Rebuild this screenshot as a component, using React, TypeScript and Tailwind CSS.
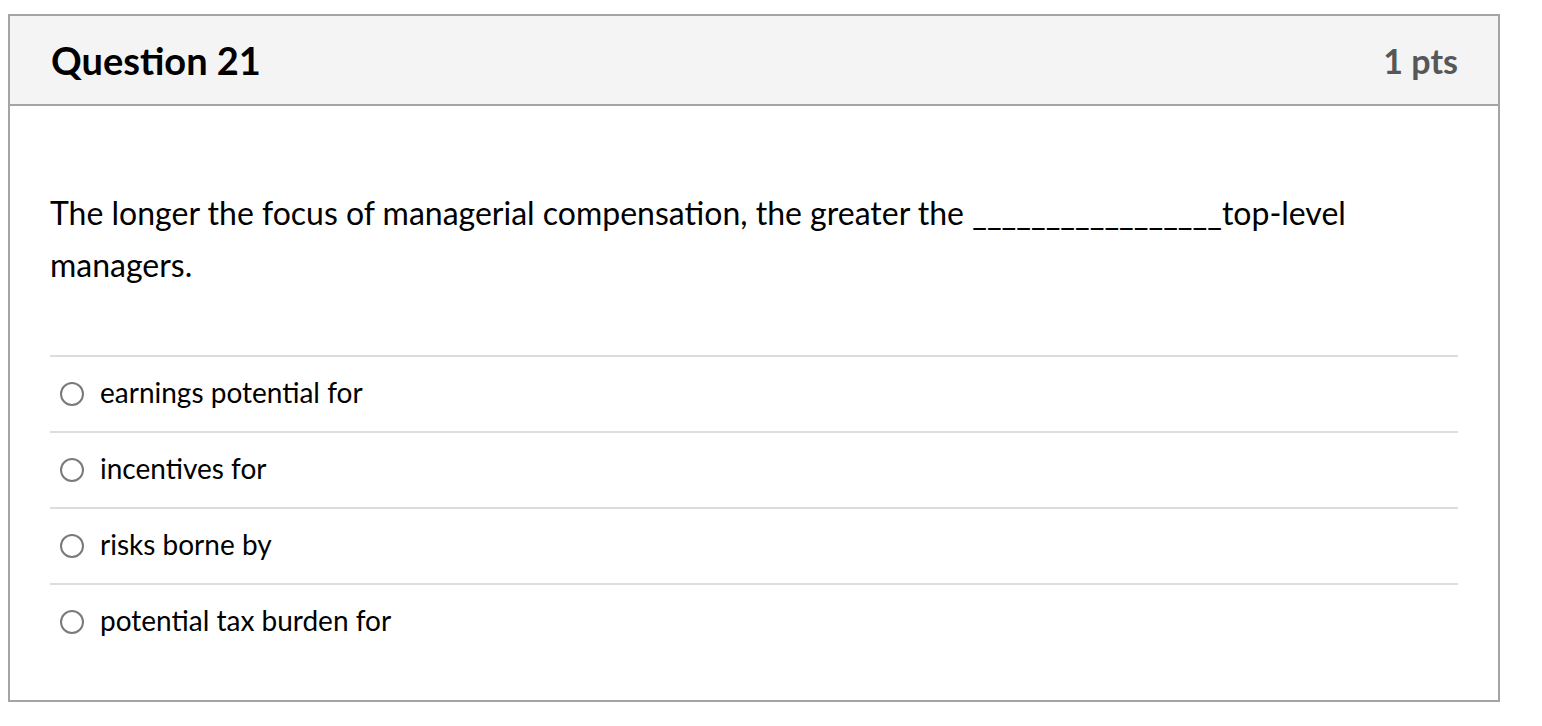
import React from 'react';

const options = ['earnings potential for', 'incentives for', 'risks borne by', 'potential tax burden for'];

export default function App() {
  return (
    <div className="min-h-screen bg-white pt-[14px] pl-[8px] pr-[42px]" style={{ fontFamily: 'Lato, "Open Sans", sans-serif' }}>
      <div className="w-[1492px] border-2 border-[#a5a5a5] bg-white">
        <div className="flex h-[90px] items-center justify-between border-b-2 border-[#a5a5a5] bg-[#f4f4f4] pl-[41px] pr-[40px]">
          <h2 className="text-[38px] font-bold text-black">Question 21</h2>
          <span className="text-[34px] font-bold text-[#575757]">1 pts</span>
        </div>
        <div className="px-[40px] pt-[81px] pb-[41px]">
          <p className="text-[32px] leading-[52px] text-black">
            The longer the focus of managerial compensation, the greater the _________________top-level managers.
          </p>
          <div className="mt-[64px]">
            {options.map((o) => (
              <div key={o} className="flex h-[76px] items-center gap-[16px] border-t-2 border-[#dddddd] pl-[10px]">
                <span className="h-[24px] w-[24px] shrink-0 rounded-full border-2 border-[#7a7a7a] bg-white" />
                <span className="pb-[4px] text-[28px] text-black">{o}</span>
              </div>
            ))}
          </div>
        </div>
      </div>
    </div>
  );
}
